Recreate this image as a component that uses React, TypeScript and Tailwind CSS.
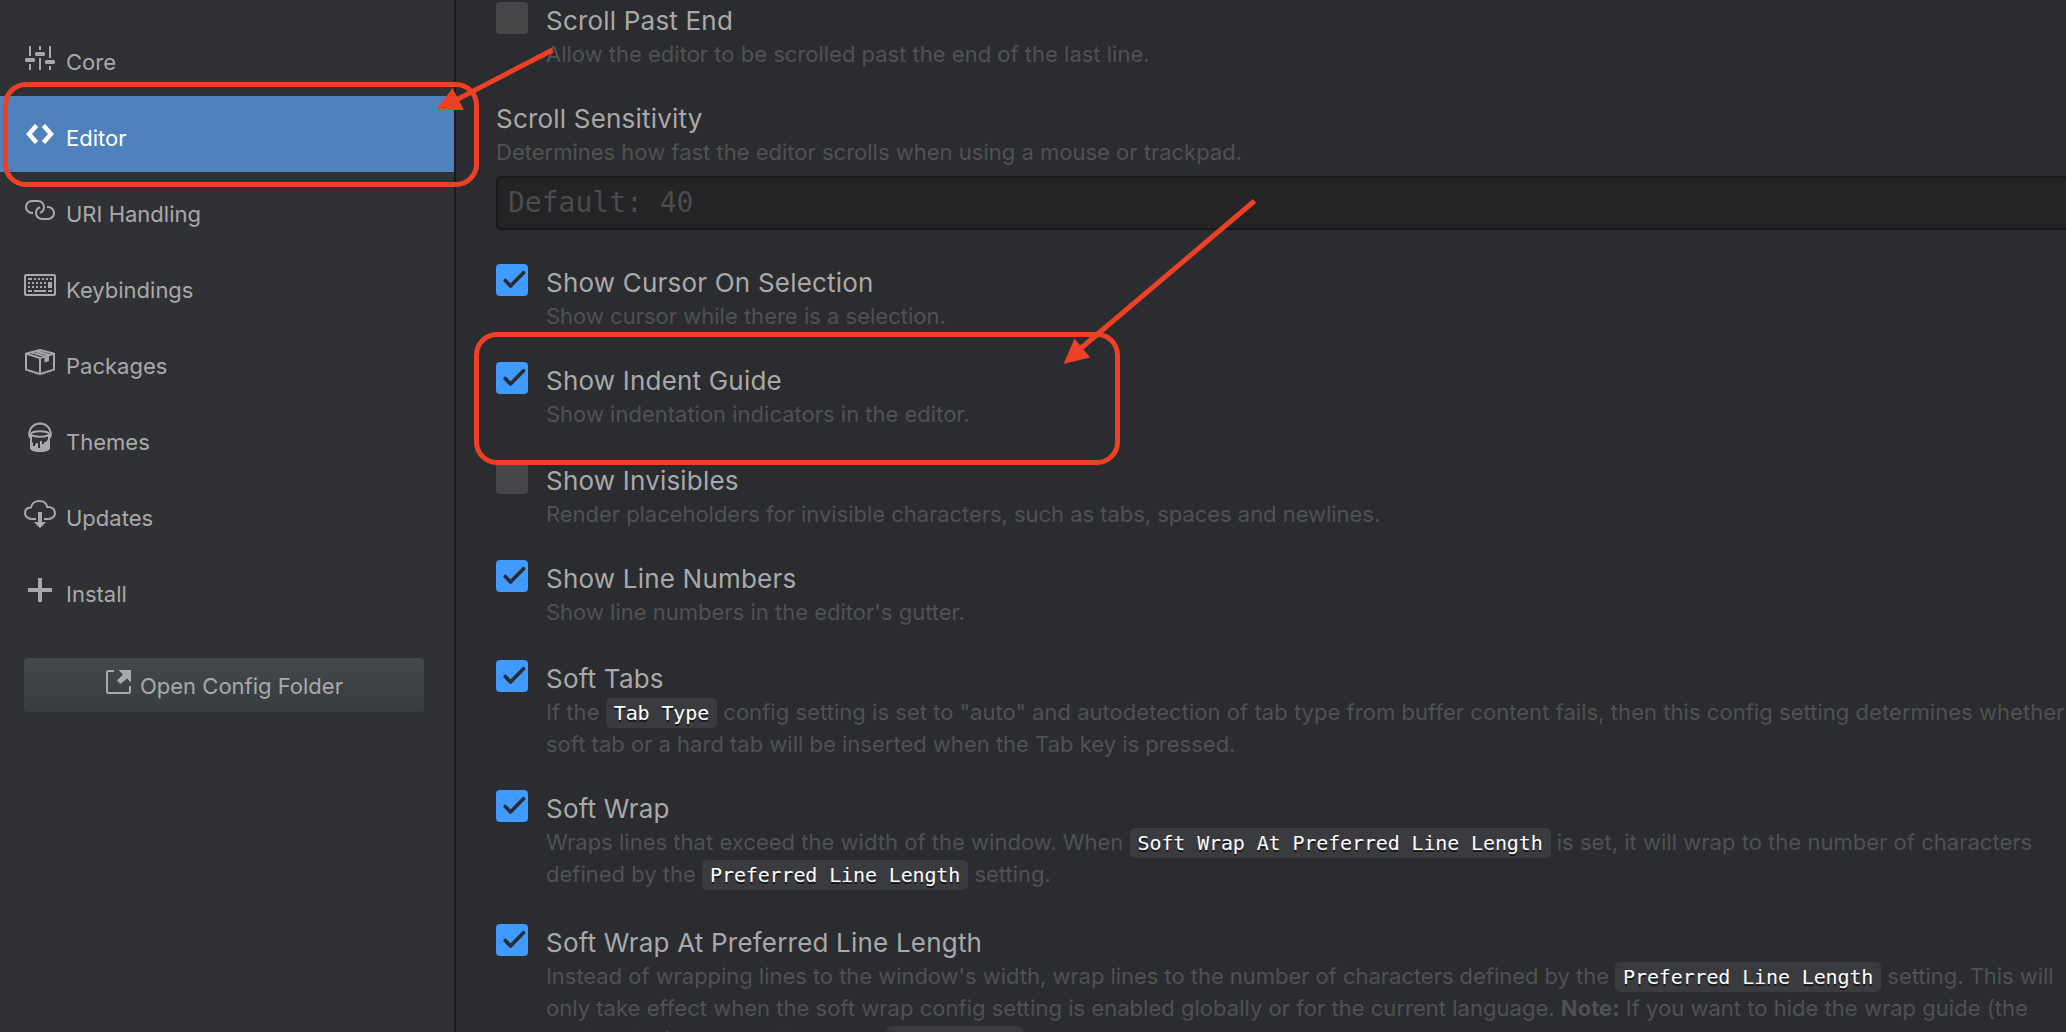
import type { ReactNode } from "react";

const stroke = { fill: "none", stroke: "currentColor", strokeWidth: 2 } as const;

const icons: Record<string, ReactNode> = {
  Core: (
    <g fill="currentColor">
      <path d="M5 26h2v10H5zM5 44h2v6H5zM15 26h2v4h-2zM15 38h2v12h-2zM25 26h2v12h-2zM25 46h2v4h-2z" />
      <rect x="1" y="38" width="10" height="4" rx="1.6" />
      <rect x="11" y="32" width="10" height="4" rx="1.6" />
      <rect x="21" y="40" width="10" height="4" rx="1.6" />
    </g>
  ),
  Editor: (
    <path
      {...stroke}
      strokeWidth={4.4}
      d="M12.500 29.500 5 38l7.500 8.500M19.500 29.500 27 38l-7.500 8.500"
    />
  ),
  "URI Handling": (
    <path
      {...stroke}
      d="M9 41H8a6 6 0 0 1 0-12h6a6 6 0 0 1 6 6c0 2.6-1.6 4.9-4 5.8M23 35h1a6 6 0 0 1 0 12h-6a6 6 0 0 1-6-6c0-2.6 1.6-4.9 4-5.8"
    />
  ),
  Keybindings: (
    <>
      <rect {...stroke} x="1" y="27" width="30" height="20" rx="1" />
      <path
        fill="currentColor"
        d="M4 30h4v2H4zM10 30h2v2h-2zM14 30h2v2h-2zM18 30h2v2h-2zM22 30h2v2h-2zM26 30h2v2h-2zM4 34h2v2H4zM8 34h2v2H8zM12 34h2v2h-2zM16 34h2v2h-2zM20 34h2v2h-2zM4 38h2v2H4zM8 38h2v2H8zM12 38h2v2h-2zM16 38h2v2h-2zM20 38h2v2h-2zM24 34h4v6h-4zM4 42h4v2H4zM10 42h12v2H10zM24 42h4v2h-4z"
      />
    </>
  ),
  Packages: (
    <>
      <path
        {...stroke}
        strokeLinejoin="round"
        d="M16 26 2 29.600v16L16 50l14-4.400v-16zM2 29.600 16 34l14-4.400M16 34v16M12 27.200 25 31M7.500 28.400l13.500 4"
      />
      <path fill="currentColor" d="M20.500 32 25 30.600v6.400l-4.500 1.500z" />
    </>
  ),
  Themes: (
    <>
      <path {...stroke} d="M6.500 38C3.500 36 5 24 16 23.500 27 24 28.500 36 25.500 38" />
      <ellipse {...stroke} cx="16" cy="34" rx="9" ry="2.800" />
      <path {...stroke} d="M7 34v14M25 34v14" />
      <path
        fill="currentColor"
        d="M6 40l3 3v3h2v-2h1v-1h2v5h2v-7h2v3h2v-2h2l2-3 2 1v8c0 2.500-4 4-10 4s-10-1.500-10-4z"
      />
    </>
  ),
  Updates: (
    <>
      <path
        {...stroke}
        d="M12 43H7.500C4 43 1 40.500 1 37c0-3.500 2.500-5.500 6-5.500C7.500 27.500 11 25 15.500 25c4 0 7 2.500 7.700 6 4.800-.4 7.800 2.300 7.800 6 0 3.500-3 6-6.500 6H20"
      />
      <path fill="currentColor" d="M14 36h4v10h4l-6 6.300L10 46h4z" />
    </>
  ),
  Install: <path fill="currentColor" d="M14 26h4v10h10v4H18v10h-4V40H4v-4h10z" />,
};

function NavItem({ name, active = false }: { name: string; active?: boolean }) {
  return (
    <li
      className={
        active
          ? "flex h-[76px] items-start bg-[#4f81bd] pl-6 text-white"
          : "flex h-[76px] items-start pl-6 text-[#a9a9a9]"
      }
    >
      <svg className="h-[76px] w-8 shrink-0" viewBox="0 0 32 76">
        {icons[name]}
      </svg>
      <span className="mt-[26px] ml-[10px] text-[22px] leading-8">{name}</span>
    </li>
  );
}

function Code({ children }: { children: ReactNode }) {
  return (
    <code className="rounded-[5px] bg-[#3a3b3e] px-2 py-[3.4px] font-['DejaVu_Sans_Mono',monospace] text-[20px] leading-none tracking-[-0.13px] text-white [text-shadow:0_2px_0_#161719]">
      {children}
    </code>
  );
}

function Lines({ lines }: { lines: ReactNode[] }) {
  return (
    <div className="text-[22px] leading-8 whitespace-nowrap text-[#505152]">
      {lines.map((line, i) => (
        <p key={i} className="h-8">
          {line}
        </p>
      ))}
    </div>
  );
}

function Option({
  title,
  lines,
  checked = false,
  className,
}: {
  title: string;
  lines: ReactNode[];
  checked?: boolean;
  className: string;
}) {
  return (
    <div className={className}>
      <span
        className={
          checked
            ? "h-8 w-8 shrink-0 rounded-[4px] bg-[#409aff]"
            : "h-8 w-8 shrink-0 rounded-[4px] bg-[#464748]"
        }
      >
        {checked && (
          <svg viewBox="0 0 32 32" className="h-8 w-8">
            <path
              d="M9.300 16.500 14.500 22 27.500 8.800"
              fill="none"
              stroke="#2b2c30"
              strokeWidth="3.700"
              strokeLinecap="round"
              strokeLinejoin="round"
            />
          </svg>
        )}
      </span>
      <div>
        <h3 className="h-9 pt-px text-[26px] leading-9 tracking-[0.2px] whitespace-nowrap text-[#a9a9a9]">
          {title}
        </h3>
        <Lines lines={lines} />
      </div>
    </div>
  );
}

function Annotations() {
  return (
    <>
      <div className="absolute top-[82px] left-[3px] h-[105px] w-[476px] rounded-[23px] border-[5px] border-[#ed4024]" />
      <div className="absolute top-[332px] left-[474px] h-[133px] w-[646px] rounded-[23px] border-[5px] border-[#ed4024]" />
      <svg className="absolute top-0 left-0 h-[400px] w-[1300px]" viewBox="0 0 1300 400">
        <g stroke="#ed4024" strokeWidth="5">
          <path d="M552.500 50 456 100" />
          <path d="M1254.500 201 1080 349" />
        </g>
        <g fill="#ed4024">
          <path d="M436 110 452.500 88 464 110z" />
          <path d="M1063.500 364 1074.500 338.500 1090 357.500z" />
        </g>
      </svg>
    </>
  );
}

export default function App() {
  return (
    <div className="relative flex h-[1032px] w-[2066px] overflow-hidden bg-[#2b2c30] font-['Inter',sans-serif]">
      <aside className="w-[456px] shrink-0 border-r-2 border-[#191a1c] bg-[#303135] pt-5">
        <ul>
          <NavItem name="Core" />
          <NavItem name="Editor" active />
          <NavItem name="URI Handling" />
          <NavItem name="Keybindings" />
          <NavItem name="Packages" />
          <NavItem name="Themes" />
          <NavItem name="Updates" />
          <NavItem name="Install" />
        </ul>
        <button className="mt-[30px] ml-6 flex h-[54px] w-[400px] items-start rounded-[4px] bg-linear-to-b from-[#45484b] to-[#393c3f] pl-[82px] text-[#a9a9a9]">
          <svg className="mt-3 h-6 w-[25px] shrink-0" viewBox="0 0 25 24">
            <path {...stroke} d="M8 1H2.500Q1 1 1 2.500V21.500Q1 23 2.500 23H22.500Q24 23 24 21.500V16" />
            <path fill="currentColor" d="M12.500 0H25v12.500l-4-4-6.500 5.500-3.500-3.500 6-6z" />
          </svg>
          <span className="mt-3 ml-[9px] text-[22px] leading-8">Open Config Folder</span>
        </button>
      </aside>

      <main className="flex min-w-0 flex-1 flex-col items-start pt-0.5 pl-10">
        <Option
          className="mb-[30px] flex h-[68px] shrink-0 gap-[18px]"
          title="Scroll Past End"
          lines={["Allow the editor to be scrolled past the end of the last line."]}
        />

        <div className="mb-[34px] h-[130px] w-full shrink-0">
          <h3 className="h-9 pt-px text-[26px] leading-9 tracking-[0.2px] text-[#a9a9a9]">
            Scroll Sensitivity
          </h3>
          <Lines
            lines={["Determines how fast the editor scrolls when using a mouse or trackpad."]}
          />
          <div className="mt-2 flex h-[54px] w-[1580px] items-center rounded-[5px] border-2 border-[#18191b] bg-[#242426] pl-[10px] font-['DejaVu_Sans_Mono',monospace] text-[28px] whitespace-pre text-[#4b4b4c]">
            Default: 40
          </div>
        </div>

        <Option
          checked
          className="mb-[30px] flex h-[68px] shrink-0 gap-[18px]"
          title="Show Cursor On Selection"
          lines={["Show cursor while there is a selection."]}
        />
        <Option
          checked
          className="mb-8 flex h-[68px] shrink-0 gap-[18px]"
          title="Show Indent Guide"
          lines={["Show indentation indicators in the editor."]}
        />
        <Option
          className="mb-[30px] flex h-[68px] shrink-0 gap-[18px]"
          title="Show Invisibles"
          lines={[
            <span className="tracking-[-0.04px]">
              Render placeholders for invisible characters, such as tabs, spaces and newlines.
            </span>,
          ]}
        />
        <Option
          checked
          className="mb-8 flex h-[68px] shrink-0 gap-[18px]"
          title="Show Line Numbers"
          lines={["Show line numbers in the editor's gutter."]}
        />
        <Option
          checked
          className="mb-[30px] flex h-[100px] shrink-0 gap-[18px]"
          title="Soft Tabs"
          lines={[
            <span className="tracking-[0.04px]">
              If the <Code>Tab Type</Code> config setting is set to "auto" and autodetection of tab
              type from buffer content fails, then this config setting determines whether
            </span>,
            "soft tab or a hard tab will be inserted when the Tab key is pressed.",
          ]}
        />
        <Option
          checked
          className="mb-[34px] flex h-[100px] shrink-0 gap-[18px]"
          title="Soft Wrap"
          lines={[
            <span className="tracking-[0.02px]">
              Wraps lines that exceed the width of the window. When{" "}
              <Code>Soft Wrap At Preferred Line Length</Code> is set, it will wrap to the number of
              characters
            </span>,
            <>
              defined by the <Code>Preferred Line Length</Code> setting.
            </>,
          ]}
        />
        <Option
          checked
          className="flex h-[132px] shrink-0 gap-[18px]"
          title="Soft Wrap At Preferred Line Length"
          lines={[
            <span className="tracking-[-0.04px]">
              Instead of wrapping lines to the window's width, wrap lines to the number of
              characters defined by the <Code>Preferred Line Length</Code> setting. This will
            </span>,
            <span className="tracking-[0.02px]">
              only take effect when the soft wrap config setting is enabled globally or for the
              current language. <strong className="font-bold">Note:</strong> If you want to hide the
              wrap guide (the
            </span>,
            <>
              vertical line) you can disable the <Code>wrap-guide</Code> package.
            </>,
          ]}
        />
      </main>

      <Annotations />
    </div>
  );
}
